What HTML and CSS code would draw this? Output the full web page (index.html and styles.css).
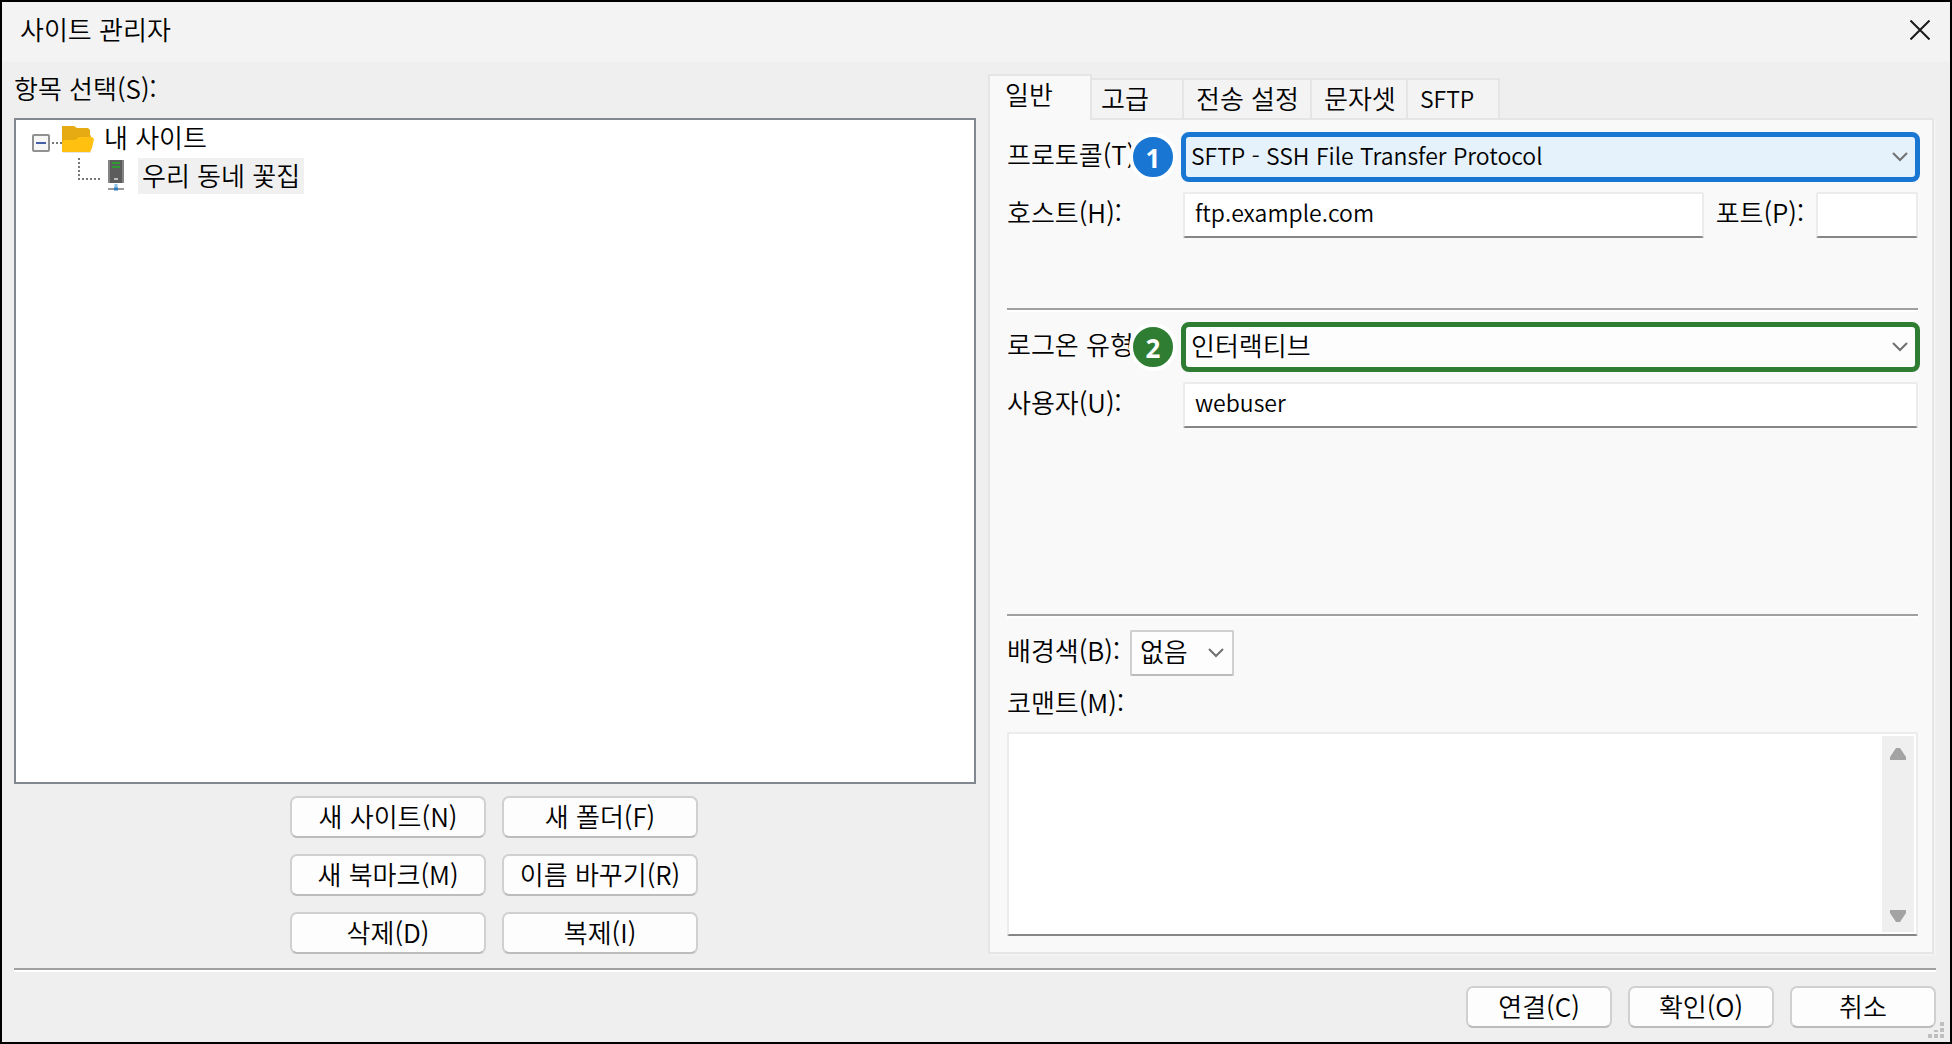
FILE: index.html
```html
<!DOCTYPE html>
<html lang="ko">
<head>
  <meta charset="UTF-8">
  <meta name="viewport" content="width=device-width, initial-scale=1.0">
  <title>사이트 관리자</title>
  <link rel="stylesheet" href="styles.css">
</head>
<body>
<div class="dialog">

  <header class="titlebar">
    <h1>사이트 관리자</h1>
    <button class="close" type="button" aria-label="닫기">
      <svg width="20" height="20" viewBox="0 0 20 20"><path d="M0.500 0.500L19.500 19.500M19.500 0.500L0.500 19.500" fill="none" stroke="#1a1a1a" stroke-width="2"/></svg>
    </button>
  </header>

  <main class="content">
    <section class="sites">
      <h2 class="caption">항목 선택(S):</h2>
      <ul class="tree">
        <li>
          <div class="node">
            <svg class="toggle" width="30" height="30" viewBox="0 -3 30 30">
              <rect x="1" y="9" width="16" height="16" rx="1" fill="#f6f6f6" stroke="#919191" stroke-width="2"/>
              <path d="M4 17h10" stroke="#4560a8" stroke-width="2"/>
              <path d="M20 17h10" stroke="#777" stroke-width="2" stroke-dasharray="2 2"/>
            </svg>
            <svg width="32" height="30" viewBox="0 -2 32 30">
              <path d="M0 1h12l3 2h11l2 2v4l1 3v14H0z" fill="#e6aa13"/>
              <path d="M0 17l2-2h11l4-3h13l2 2-2 9-2 4H0z" fill="#ffc010"/>
              <path d="M1 27.500h28" stroke="#e5e5e5" stroke-width="1"/>
            </svg>
            <span class="name">내 사이트</span>
          </div>
          <ul>
            <li class="node">
              <svg class="branch" width="24" height="36" viewBox="0 0 24 36"><path d="M1 0v21h22" fill="none" stroke="#777" stroke-width="2" stroke-dasharray="2 2"/></svg>
              <svg width="18" height="34" viewBox="0 -1 18 34">
                <rect x="1" y="0" width="15" height="23" fill="#5c5c5c"/>
                <path d="M1 0v23M15 0v23" stroke="#858585" stroke-width="2"/>
                <path d="M4 3h8M4 7h8" stroke="#2e9b32" stroke-width="2"/>
                <path d="M6 19h4" stroke="#bbb" stroke-width="2"/>
                <path d="M8 24v4" stroke="#8cc0e8" stroke-width="3"/>
                <path d="M0 29h16" stroke="#9a9a9a" stroke-width="2"/>
                <path d="M6 29h4" stroke="#2d7fc0" stroke-width="3"/>
              </svg>
              <span class="name selected">우리 동네 꽃집</span>
            </li>
          </ul>
        </li>
      </ul>
      <div class="site-buttons">
        <button type="button">새 사이트(N)</button>
        <button type="button">새 폴더(F)</button>
        <button type="button">새 북마크(M)</button>
        <button type="button">이름 바꾸기(R)</button>
        <button type="button">삭제(D)</button>
        <button type="button">복제(I)</button>
      </div>
    </section>

    <section class="settings">
      <div class="tabs" role="tablist">
        <button class="tab tab-general active" type="button" role="tab" aria-selected="true">일반</button>
        <button class="tab tab-advanced" type="button" role="tab">고급</button>
        <button class="tab tab-transfer" type="button" role="tab">전송 설정</button>
        <button class="tab tab-charset" type="button" role="tab">문자셋</button>
        <button class="tab tab-sftp" type="button" role="tab">SFTP</button>
      </div>

      <form class="panel">
        <div class="rows rows-server">
          <label for="protocol">프로토콜(T):</label>
          <div class="picker marked blue">
            <span class="badge">1</span>
            <select id="protocol" class="latin"><option>SFTP - SSH File Transfer Protocol</option></select>
            <svg class="chevron" width="16" height="10" viewBox="0 0 16 10"><path d="M1 1l7 7 7-7"/></svg>
          </div>
          <label for="host">호스트(H):</label>
          <div class="host-line">
            <input id="host" class="latin" type="text" value="ftp.example.com">
            <label for="port">포트(P):</label>
            <input id="port" class="latin port" type="text">
          </div>
        </div>
        <hr>
        <div class="rows rows-logon">
          <label for="logon">로그온 유형(L):</label>
          <div class="picker marked green">
            <span class="badge">2</span>
            <select id="logon"><option>인터랙티브</option></select>
            <svg class="chevron" width="16" height="10" viewBox="0 0 16 10"><path d="M1 1l7 7 7-7"/></svg>
          </div>
          <label for="user">사용자(U):</label>
          <input id="user" class="latin" type="text" value="webuser">
        </div>
        <hr>
        <div class="color-line">
          <label for="color">배경색(B):</label>
          <div class="picker">
            <select id="color"><option>없음</option></select>
            <svg class="chevron" width="16" height="10" viewBox="0 0 16 10"><path d="M1 1l7 7 7-7"/></svg>
          </div>
        </div>
        <label class="comment-label" for="comment">코맨트(M):</label>
        <div class="comment">
          <textarea id="comment"></textarea>
          <div class="scrollbar" aria-hidden="true">
            <svg width="16" height="12" viewBox="0 0 16 12"><path d="M0 12V9L6 0h4l6 9v3z" fill="#a3a3a3"/></svg>
            <svg width="16" height="12" viewBox="0 0 16 12"><path d="M0 0v3l6 9h4l6-9V0z" fill="#a3a3a3"/></svg>
          </div>
        </div>
      </form>
    </section>
  </main>

  <footer class="footer">
    <button type="button">연결(C)</button>
    <button type="button">확인(O)</button>
    <button type="button">취소</button>
  </footer>
  <svg class="grip" width="16" height="16" viewBox="0 0 16 16" fill="#bfbfbf"><path d="M12 0h4v4h-4zM12 6h4v4h-4zM6 8h4v2H6zM12 12h4v4h-4zM6 12h4v4H6zM0 12h4v4H0z"/></svg>
</div>
</body>
</html>
```
FILE: styles.css
```css
* { box-sizing: border-box; }
body { margin: 0; font-family: "Noto Sans CJK KR", sans-serif; font-size: 26px; font-weight: 350; line-height: 36px; color: #000; }
h1, h2 { margin: 0; font-size: inherit; font-weight: inherit; }
button, input, select, textarea { font: inherit; color: inherit; margin: 0; }
ul { list-style: none; margin: 0; padding: 0; }
svg { display: block; flex: none; }

.dialog { position: relative; min-height: 100vh; display: flex; flex-direction: column; border: 2px solid #000; background: #efefef; }

.titlebar { display: flex; justify-content: space-between; align-items: center; height: 60px; padding: 0 20px 4px 18px; background: #f3f3f3; }
.titlebar h1 { padding-bottom: 2px; }
.close { padding: 0; border: 0; background: none; }

.content { flex: 1; display: grid; grid-template-columns: 962fr 948fr; gap: 12px; padding: 12px 14px 14px 12px; }
.sites, .settings { display: flex; flex-direction: column; min-width: 0; }

.caption { height: 44px; line-height: 28px; }
.tree { flex: 1; border: 2px solid #828790; background: #fff; padding: 0 16px; }
.node { display: flex; align-items: center; height: 36px; }
.node .name { margin-left: 6px; padding: 0 4px 2px; line-height: 34px; }
.node .branch { margin: 0 6px 0 46px; }
.node .selected { margin-left: 12px; background: #f0f0f0; }
.tree ul { padding-top: 2px; }

.site-buttons { display: grid; grid-template-columns: 196px 196px; gap: 16px; justify-content: center; padding: 12px 2px 0 0; }
.site-buttons button, .footer button { height: 42px; padding: 0 0 2px; line-height: 36px; border: 2px solid #d0d0d0; border-bottom-color: #bcbcbc; border-radius: 7px; background: #fdfdfd; }

.tabs { display: flex; align-items: flex-end; height: 46px; margin-bottom: -2px; z-index: 1; }
.tab { height: 42px; padding: 0 0 2px 12px; text-align: left; border: 2px solid #e5e5e5; border-left: 0; background: #f3f3f3; }
.tab.active { height: 46px; padding: 0 0 12px 15px; border-left: 2px solid #e5e5e5; border-bottom: 0; background: #f9f9f9; }
.tab-general { width: 104px; }
.tab-advanced { width: 92px; padding-left: 9px; }
.tab-transfer { width: 128px; }
.tab-charset { width: 96px; }
.tab-sftp { width: 92px; font-size: 23px; }

.panel { flex: 1; display: flex; flex-direction: column; margin-right: 2px; padding: 14px 14px 16px 17px; border: 2px solid #e5e5e5; background: #f9f9f9; box-shadow: 2px 2px 0 #f3f3f3; }
.rows { display: grid; grid-template-columns: 176px 1fr; grid-auto-rows: 46px; align-items: stretch; gap: 12px 0; }
.rows-server { padding-bottom: 70px; }
.rows-logon { padding: 12px 0 186px; }
.panel label { line-height: 40px; white-space: nowrap; }
.panel hr { width: 100%; height: 4px; margin: 0; border: 0; border-top: 2px solid #a0a0a0; background: #fff; }
input { width: 100%; min-width: 0; height: 46px; padding: 0 10px 6px; border: 2px solid #ececec; border-bottom-color: #868686; border-radius: 2px; background: #fff; }
.panel .latin { font-size: 23px; }
.host-line { display: flex; }
.host-line label { margin: 0 12px; }
.host-line .port { width: 102px; flex: none; }

.picker { position: relative; display: flex; }
.picker select { appearance: none; width: 100%; height: 46px; padding: 0 40px 4px 8px; border: 2px solid #d0d0d0; border-bottom-color: #bcbcbc; border-radius: 2px; background: #fdfdfd; }
.chevron { position: absolute; right: 10px; top: 18px; fill: none; stroke: #707070; stroke-width: 2; pointer-events: none; }
.marked { margin: -2px; }
.marked select { height: 50px; padding: 0 40px 4px 5px; border: 5px solid; border-radius: 8px; }
.marked .chevron { right: 12px; top: 20px; }
.badge { position: absolute; left: -52px; top: 1px; width: 48px; height: 48px; border: 4px solid #fff; border-radius: 50%; color: #fff; font-family: "Open Sans", sans-serif; font-weight: bold; line-height: 42px; text-align: center; }
.blue .badge { background: #1976d2; }
.blue select { border-color: #1976d2; background: #e5f1fb; }
.green .badge { background: #2e7d32; }
.green select { border-color: #2e7d32; }

.color-line { display: flex; gap: 10px; padding-top: 12px; }
.color-line .picker { width: 104px; }
.comment-label { height: 56px; padding-top: 6px; }
.comment { flex: 1; display: flex; min-height: 120px; padding: 2px; border: 2px solid #ececec; border-bottom-color: #868686; border-radius: 2px; background: #fff; }
.comment textarea { flex: 1; min-width: 0; padding: 4px 8px; border: 0; resize: none; background: none; }
.scrollbar { width: 32px; display: flex; flex-direction: column; justify-content: space-between; align-items: center; padding: 12px 0 10px; background: #efefef; }

.footer { display: flex; justify-content: flex-end; gap: 16px; margin: 0 14px 0 12px; padding: 16px 0 14px; border-top: 2px solid #a0a0a0; box-shadow: inset 0 2px 0 #fff; }
.footer button { width: 146px; }
.grip { position: absolute; right: 6px; bottom: 4px; }
```
